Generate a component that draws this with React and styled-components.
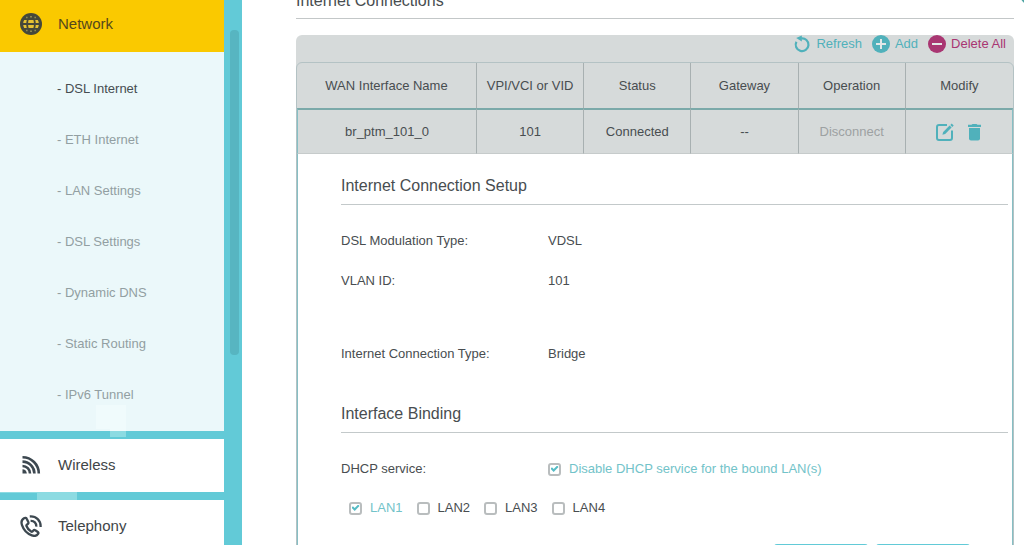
import React, { useState } from "react";
import styled, { createGlobalStyle } from "styled-components";

const subItems = [
  "DSL Internet",
  "ETH Internet",
  "LAN Settings",
  "DSL Settings",
  "Dynamic DNS",
  "Static Routing",
  "IPv6 Tunnel",
];

const columns = [
  "WAN Interface Name",
  "VPI/VCI or VID",
  "Status",
  "Gateway",
  "Operation",
  "Modify",
];

function GlobeIcon() {
  return (
    <svg width="22" height="22" viewBox="0 0 22 22" fill="none">
      <circle cx="11" cy="11" r="11" fill="#45483a" />
      <g fill="#e6c233">
        <path d="M4.200 7h2.600q-.5 1.400-.5 2.900H3.200Q3.400 8.300 4.200 7z" />
        <path d="M8.600 7h4.800q.5 1.400.5 2.900H8.100q0-1.500.5-2.900z" />
        <path d="M17.800 7h-2.600q.5 1.400.5 2.900h3.100Q18.600 8.300 17.800 7z" />
        <path d="M4.200 15h2.600q-.5-1.400-.5-2.900H3.200q.2 1.600 1 2.900z" />
        <path d="M8.600 15h4.800q.5-1.400.5-2.900H8.100q0 1.500.5 2.900z" />
        <path d="M17.800 15h-2.600q.5-1.400.5-2.900h3.100q-.2 1.600-1 2.900z" />
      </g>
      <path
        d="M6 4.500h1.600M10 3.800h2M14.400 4.500H16M6 17.500h1.600M10 18.200h2M14.400 17.500H16"
        stroke="#8d8a52"
        strokeWidth="1.400"
      />
    </svg>
  );
}

function WirelessIcon() {
  return (
    <svg width="22" height="22" viewBox="0 0 22 22" fill="none" stroke="#3d4850" strokeWidth="2.600">
      <path d="M2.500 3.200A16.300 16.300 0 0 1 18.800 19.500" />
      <path d="M2.500 7.600A11.900 11.900 0 0 1 14.400 19.500" />
      <path d="M2.500 12A7.500 7.500 0 0 1 10 19.500" />
      <path d="M2.500 15.200a4.300 4.300 0 0 1 4.300 4.300H2.500z" fill="#3d4850" stroke="none" />
    </svg>
  );
}

function PhoneIcon() {
  return (
    <svg width="22" height="22" viewBox="0 0 22 22" fill="none" stroke="#3d4850" strokeWidth="2.300" strokeLinejoin="round">
      <path d="M4 3.200C1.600 4.600 1 7.200 2 10.200c1.600 4.800 5.400 8.600 9.800 10.200 2.800 1 5 .4 6.300-1.500.5-.7.300-1.400-.3-1.900l-2.500-1.700c-.7-.5-1.500-.4-2 .2l-.8.9c-.4.4-.9.500-1.400.2-2.200-1.300-3.700-3.200-4.600-5.600-.2-.5 0-1 .4-1.300l.9-.7c.6-.4.800-1.200.5-1.900L6.800 3.900C6.400 2.900 5 2.600 4 3.200z" />
      <path d="M9.800 1.500C16.200 1 21 5.600 20.600 12" />
      <path d="M10.600 5.900c3.600-.2 5.900 2.200 5.700 5.700" />
    </svg>
  );
}

function RefreshIcon() {
  return (
    <svg width="18" height="18" viewBox="0 0 18 18" fill="none">
      <path d="M8.200 3.400A6.400 6.400 0 1 1 3.400 6.800" stroke="currentColor" strokeWidth="2.200" />
      <path d="M8.800.4v6L3.200 2.900z" fill="currentColor" />
    </svg>
  );
}

function RoundIcon({ plus }) {
  return (
    <svg width="18" height="18" viewBox="0 0 18 18">
      <circle cx="9" cy="9" r="9" fill="currentColor" />
      <path d={plus ? "M4 9h10M9 4v10" : "M4 9h10"} stroke="#e3e8e8" strokeWidth="2" />
    </svg>
  );
}

function EditIcon() {
  return (
    <svg width="18" height="18" viewBox="0 0 18 18" fill="none">
      <path d="M11 2H3a2 2 0 0 0-2 2v11a2 2 0 0 0 2 2h11a2 2 0 0 0 2-2V7.500" stroke="currentColor" strokeWidth="2" />
      <path d="M6.400 11.800l.8-2.800L13.600 2.600l2 2-6.400 6.400z" fill="currentColor" />
      <path d="M14.300 1.900L15.700.5l2 2-1.400 1.400z" fill="currentColor" />
    </svg>
  );
}

function TrashIcon() {
  return (
    <svg width="13" height="18" viewBox="0 0 13 18" fill="currentColor">
      <path d="M0 1.800h3.500L4.500 1h4l1 .8H13V4H0z" />
      <path d="M1 5h11v10.500a2 2 0 0 1-2 2H3a2 2 0 0 1-2-2z" />
    </svg>
  );
}

function App() {
  const [dhcpOff, setDhcpOff] = useState(true);
  const [lans, setLans] = useState([true, false, false, false]);

  const toggleLan = (index) => {
    setLans(lans.map((on, i) => (i === index ? !on : on)));
  };

  return (
    <Page>
      <GlobalStyle />
      <Sidebar>
        <Menu>
          <MenuItem href="#network" $active>
            <GlobeIcon />
            Network
          </MenuItem>
          <SubMenu>
            {subItems.map((item, i) => (
              <SubItem href="#network" key={item} $active={i === 0}>
                - {item}
              </SubItem>
            ))}
          </SubMenu>
          <MenuItem href="#wireless">
            <WirelessIcon />
            Wireless
          </MenuItem>
          <MenuItem href="#telephony">
            <PhoneIcon />
            Telephony
          </MenuItem>
        </Menu>
        <ScrollTrack>
          <ScrollThumb />
        </ScrollTrack>
      </Sidebar>

      <Main>
        <PageTitle>Internet Connections</PageTitle>
        <Panel>
          <Toolbar>
            <ToolButton>
              <RefreshIcon />
              Refresh
            </ToolButton>
            <ToolButton>
              <RoundIcon plus />
              Add
            </ToolButton>
            <ToolButton $danger>
              <RoundIcon />
              Delete All
            </ToolButton>
          </Toolbar>
          <Table>
            <thead>
              <tr>
                {columns.map((name) => (
                  <HeadCell key={name}>{name}</HeadCell>
                ))}
              </tr>
            </thead>
            <tbody>
              <tr>
                <Cell>br_ptm_101_0</Cell>
                <Cell>101</Cell>
                <Cell>Connected</Cell>
                <Cell>--</Cell>
                <Cell>
                  <TextButton disabled>Disconnect</TextButton>
                </Cell>
                <Cell>
                  <Actions>
                    <IconButton aria-label="Edit">
                      <EditIcon />
                    </IconButton>
                    <IconButton aria-label="Delete">
                      <TrashIcon />
                    </IconButton>
                  </Actions>
                </Cell>
              </tr>
              <tr>
                <DetailCell colSpan={6}>
                  <SectionTitle>Internet Connection Setup</SectionTitle>
                  <Field>
                    <span>DSL Modulation Type:</span>
                    <span>VDSL</span>
                  </Field>
                  <Field>
                    <span>VLAN ID:</span>
                    <span>101</span>
                  </Field>
                  <Field $spaced>
                    <span>Internet Connection Type:</span>
                    <span>Bridge</span>
                  </Field>
                  <SectionTitle>Interface Binding</SectionTitle>
                  <Field>
                    <span>DHCP service:</span>
                    <CheckLabel $checked={dhcpOff}>
                      <CheckBox type="checkbox" checked={dhcpOff} onChange={() => setDhcpOff(!dhcpOff)} />
                      Disable DHCP service for the bound LAN(s)
                    </CheckLabel>
                  </Field>
                  <LanRow>
                    {lans.map((on, i) => (
                      <CheckLabel key={i} $checked={on}>
                        <CheckBox type="checkbox" checked={on} onChange={() => toggleLan(i)} />
                        LAN{i + 1}
                      </CheckLabel>
                    ))}
                  </LanRow>
                  <ButtonRow>
                    <FormButton aria-label="Cancel" />
                    <FormButton aria-label="OK" />
                  </ButtonRow>
                </DetailCell>
              </tr>
            </tbody>
          </Table>
        </Panel>
        <HelpButton aria-label="Help" />
      </Main>
    </Page>
  );
}

const GlobalStyle = createGlobalStyle`
  * {
    box-sizing: border-box;
  }

  body {
    margin: 0;
    background: #fff;
    color: #484d50;
    font-family: "Liberation Sans", Arial, sans-serif;
    font-size: 13px;
    line-height: 20px;
  }

  button {
    border: none;
    padding: 0;
    background: none;
    font: inherit;
    color: inherit;
  }

  svg {
    display: block;
    flex: none;
  }
`;

const Page = styled.div`
  display: flex;
  height: 100vh;
  overflow: hidden;
`;

const Sidebar = styled.aside`
  flex: none;
  display: flex;
  width: 242px;
  background:
    linear-gradient(#8cdbe2, #8cdbe2) 110px 405px / 16px 32px no-repeat,
    linear-gradient(#8cdbe2, #8cdbe2) 37px 492px / 40px 8px no-repeat,
    linear-gradient(#8cdbe2, #8cdbe2) 0 492px / 37px 1px no-repeat,
    linear-gradient(#8cdbe2, #8cdbe2) 96px 405px / 30px 24px no-repeat,
    #62cad7;
`;

const Menu = styled.nav`
  flex: 1;
  display: flex;
  flex-direction: column;
`;

const MenuItem = styled.a`
  flex: none;
  display: flex;
  align-items: center;
  gap: 16px;
  height: ${(props) => (props.$active ? "52px" : "53px")};
  margin-bottom: ${(props) => (props.$active ? "0" : "8px")};
  padding: 0 20px ${(props) => (props.$active ? "4px" : "2px")};
  background: ${(props) => (props.$active ? "#fac900" : "#fff")};
  color: ${(props) => (props.$active ? "#54481c" : "#414548")};
  font-size: 15px;
  text-decoration: none;
`;

const SubMenu = styled.div`
  flex: none;
  margin-bottom: 8px;
  padding: 11px 0;
  background: rgba(255, 255, 255, 0.87);
`;

const SubItem = styled.a`
  display: block;
  padding-left: 57px;
  line-height: 51px;
  color: ${(props) => (props.$active ? "#464d51" : "#929fa2")};
  text-decoration: none;
`;

const ScrollTrack = styled.div`
  width: 18px;
  padding: 30px 3px 0 6px;
`;

const ScrollThumb = styled.div`
  height: 325px;
  border-radius: 4px;
  background: #57b5c1;
`;

const Main = styled.main`
  position: relative;
  flex: 1;
  padding: 0 10px 0 54px;
`;

const PageTitle = styled.h1`
  margin: -9px 0 16px;
  padding-bottom: 7px;
  border-bottom: 1px solid #c3c7c8;
  font-size: 16px;
  font-weight: normal;
`;

const Panel = styled.section`
  border-radius: 6px 6px 0 0;
  background: #d6dada;
`;

const Toolbar = styled.div`
  display: flex;
  justify-content: flex-end;
  gap: 10px;
  height: 27px;
  padding: 0 8px 9px 0;
`;

const ToolButton = styled.button`
  display: flex;
  align-items: center;
  gap: 5px;
  height: 18px;
  color: ${(props) => (props.$danger ? "#a93672" : "#50b1bb")};
`;

const Table = styled.table`
  width: 100%;
  table-layout: fixed;
  border: 1px solid #b4c2c4;
  border-radius: 6px 6px 0 0;
  border-spacing: 0;
`;

const HeadCell = styled.th`
  height: 45px;
  padding: 0;
  border-right: 1px solid #a8b0b1;
  font-weight: normal;

  &:first-child {
    width: 180px;
  }
  &:last-child {
    border-right: none;
  }
`;

const Cell = styled.td`
  height: 46px;
  padding: 0;
  border-top: 2px solid #7ba9a9;
  border-right: 1px solid #a8b0b1;
  border-bottom: 1px solid #c6cbcb;
  text-align: center;

  &:first-child {
    border-left: 1px solid #86bfc4;
  }
  &:last-child {
    border-right-color: #86bfc4;
  }
`;

const TextButton = styled.button`
  color: #9da1a2;
`;

const Actions = styled.div`
  display: flex;
  justify-content: center;
  align-items: center;
  gap: 14px;
`;

const IconButton = styled.button`
  color: #50b1bb;
`;

const DetailCell = styled.td`
  padding: 0 4px 20px 43px;
  border: 1px solid #86bfc4;
  border-top: none;
  background: #fff;
`;

const SectionTitle = styled.h2`
  margin: 0 0 16px;
  padding: 22px 0 8px;
  border-bottom: 1px solid #c3c9ca;
  font-size: 16px;
  font-weight: normal;
`;

const Field = styled.div`
  display: grid;
  grid-template-columns: 207px 1fr;
  align-items: center;
  height: 40px;
  margin: ${(props) => (props.$spaced ? "33px 0 8px" : "0")};
`;

const CheckLabel = styled.label`
  display: flex;
  align-items: center;
  gap: 8px;
  color: ${(props) => (props.$checked ? "#72c3c9" : "inherit")};
`;

const CheckBox = styled.input`
  flex: none;
  display: grid;
  place-items: center;
  appearance: none;
  width: 13px;
  height: 13px;
  margin: 0;
  border: 2px solid #b9bdbe;
  border-radius: 3px;

  &:checked::before {
    content: "";
    width: 8px;
    height: 7px;
    background: #55bcc5;
    clip-path: polygon(0 45%, 18% 25%, 40% 50%, 84% 0, 100% 22%, 40% 92%);
  }
`;

const LanRow = styled.div`
  display: flex;
  gap: 14px;
  height: 38px;
  padding-left: 8px;
`;

const ButtonRow = styled.div`
  display: flex;
  justify-content: flex-end;
  gap: 8px;
  padding: 17px 38px 0 0;
`;

const FormButton = styled.button`
  width: 94px;
  height: 28px;
  border-radius: 3px;
  background: #62cad7;
`;

const HelpButton = styled.button`
  position: absolute;
  top: -22px;
  right: -23px;
  width: 28px;
  height: 28px;
  border-radius: 50%;
  background: #4fa5a4;
`;

export default App;
